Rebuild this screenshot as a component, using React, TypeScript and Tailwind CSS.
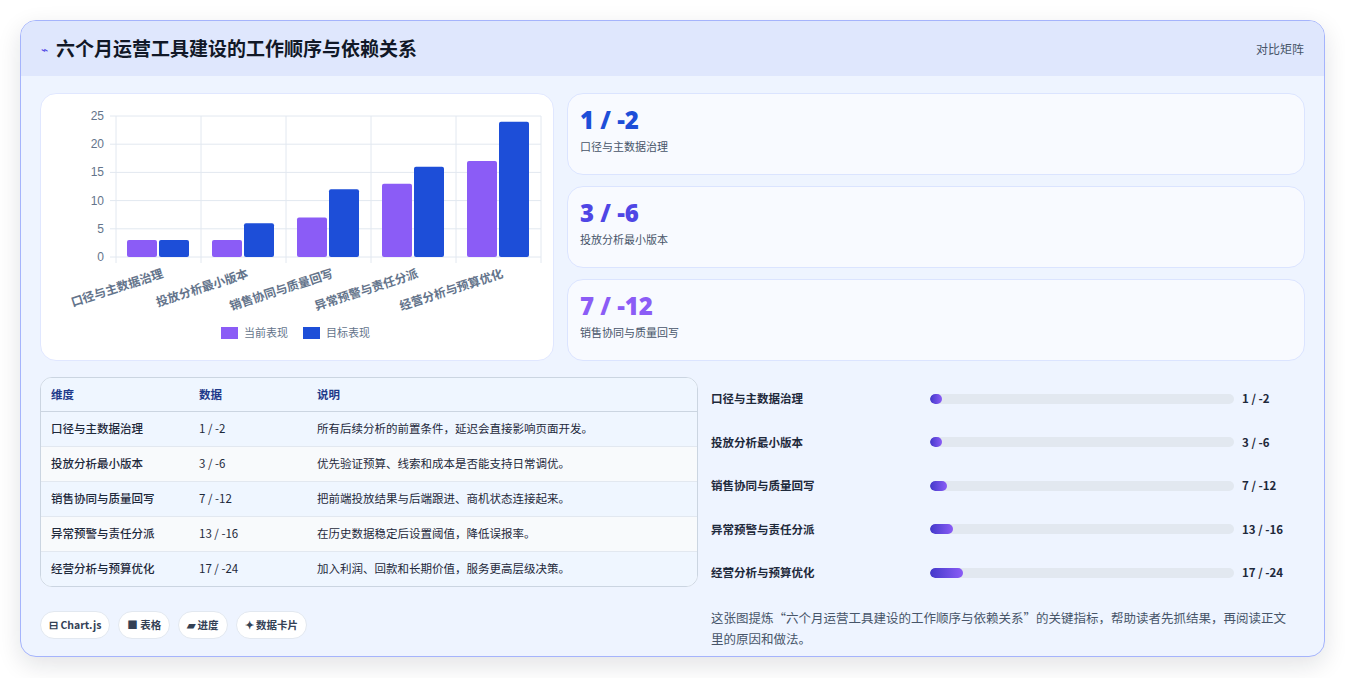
const rows = [
  { name: "口径与主数据治理", cur: 3, tgt: 3, data: "1 / -2", note: "所有后续分析的前置条件，延迟会直接影响页面开发。", pct: 4 },
  { name: "投放分析最小版本", cur: 3, tgt: 6, data: "3 / -6", note: "优先验证预算、线索和成本是否能支持日常调优。", pct: 4 },
  { name: "销售协同与质量回写", cur: 7, tgt: 12, data: "7 / -12", note: "把前端投放结果与后端跟进、商机状态连接起来。", pct: 5.5 },
  { name: "异常预警与责任分派", cur: 13, tgt: 16, data: "13 / -16", note: "在历史数据稳定后设置阈值，降低误报率。", pct: 7.5 },
  { name: "经营分析与预算优化", cur: 17, tgt: 24, data: "17 / -24", note: "加入利润、回款和长期价值，服务更高层级决策。", pct: 11 },
];

const font = { fontFamily: '"Noto Sans CJK SC", "Noto Sans", sans-serif' };

function Chart() {
  const x0 = 75, y0 = 163, top = 22, h = y0 - top, cw = 85;
  const sy = (v: number) => y0 - (v / 25) * h;
  return (
    <svg width="512" height="266" viewBox="0 0 512 266" className="block">
      {[0, 5, 10, 15, 20, 25].map((v) => (
        <g key={v}>
          <line x1={x0 - 6} x2={500} y1={sy(v)} y2={sy(v)} stroke="#e2e8f0" />
          <text x={x0 - 12} y={sy(v) + 4} textAnchor="end" fontSize="12" fill="#64748b" fontFamily="Liberation Sans, sans-serif">{v}</text>
        </g>
      ))}
      {[0, 1, 2, 3, 4, 5].map((i) => (
        <line key={i} x1={x0 + i * cw} x2={x0 + i * cw} y1={top} y2={y0 + 6} stroke="#e2e8f0" />
      ))}
      {rows.map((r, i) => (
        <g key={r.name}>
          <rect x={x0 + i * cw + 11} y={sy(r.cur)} width={30} height={y0 - sy(r.cur)} rx="2" fill="#8b5cf6" />
          <rect x={x0 + i * cw + 43} y={sy(r.tgt)} width={30} height={y0 - sy(r.tgt)} rx="2" fill="#1d4ed8" />
          <text transform={`translate(${x0 + i * cw + 48},${y0 + 20}) rotate(-18)`} textAnchor="end" fontSize="12" fontWeight="700" fill="#64748b" style={font}>{r.name}</text>
        </g>
      ))}
      <rect x="180" y="233" width="17" height="12" fill="#8b5cf6" />
      <text x="203" y="243" fontSize="11" fill="#64748b" style={font}>当前表现</text>
      <rect x="262" y="233" width="17" height="12" fill="#1d4ed8" />
      <text x="285" y="243" fontSize="11" fill="#64748b" style={font}>目标表现</text>
    </svg>
  );
}

const cards = [
  { v: "1 / -2", l: "口径与主数据治理", c: "text-[#1d4ed8]" },
  { v: "3 / -6", l: "投放分析最小版本", c: "text-[#4f46e5]" },
  { v: "7 / -12", l: "销售协同与质量回写", c: "text-[#8b5cf6]" },
];

export default function App() {
  return (
    <div className="min-h-screen bg-white p-5 pb-0" style={font}>
      <div className="rounded-2xl border border-[#a5b4fc] bg-[#eef4ff] shadow-[0_8px_24px_rgba(15,23,42,0.12)] overflow-hidden h-[637px]">
        <div className="flex items-center justify-between h-[55px] bg-[#dfe7fd] px-5">
          <div className="flex items-center gap-2">
            <span className="text-[#4f46e5] text-xs">⌁</span>
            <span className="text-[19px] font-bold text-[#111827]">六个月运营工具建设的工作顺序与依赖关系</span>
          </div>
          <span className="text-xs text-[#475569]">对比矩阵</span>
        </div>
        <div className="px-[19px] pt-[17px]">
          <div className="flex gap-[13px]">
            <div className="w-[514px] h-[268px] rounded-2xl bg-white border border-[#e0e7ff]">
              <Chart />
            </div>
            <div className="flex-1 flex flex-col gap-[11px]">
              {cards.map((c) => (
                <div key={c.v} className="h-[82px] rounded-2xl bg-[#f8faff] border border-[#dbe4ff] px-3 pt-3">
                  <div className={`text-[24px] leading-7 font-extrabold ${c.c}`} style={{ fontFamily: '"Open Sans", sans-serif' }}>{c.v}</div>
                  <div className="text-[11px] text-[#475569] mt-1">{c.l}</div>
                </div>
              ))}
            </div>
          </div>
          <div className="flex gap-[13px] mt-[16px]">
            <div className="w-[658px]">
              <div className="rounded-xl border border-[#cbd5e1] overflow-hidden bg-white">
                <table className="w-full text-[11.5px] text-[#1e293b]">
                  <thead>
                    <tr className="bg-[#eff6ff] h-[33px] text-left text-[#1e3a8a] font-bold border-b border-[#cbd5e1]">
                      <th className="pl-2.5 w-[158px] font-bold">维度</th>
                      <th className="w-[118px] font-bold">数据</th>
                      <th className="font-bold">说明</th>
                    </tr>
                  </thead>
                  <tbody>
                    {rows.map((r, i) => (
                      <tr key={r.name} className={`h-[35px] ${i < 4 ? "border-b border-[#e2e8f0]" : ""} ${i % 2 ? "bg-[#f8fafc]" : "bg-[#eff6ff]"}`}>
                        <td className="pl-2.5 font-medium">{r.name}</td>
                        <td>{r.data}</td>
                        <td>{r.note}</td>
                      </tr>
                    ))}
                  </tbody>
                </table>
              </div>
              <div className="flex gap-2 mt-6">
                {["⊟ Chart.js", "■ 表格", "▰ 进度", "✦ 数据卡片"].map((t) => (
                  <span key={t} className="rounded-full bg-white border border-[#e2e8f0] px-2 h-[28px] flex items-center text-[10.5px] font-bold text-[#334155]">{t}</span>
                ))}
              </div>
            </div>
            <div className="flex-1 pl-0">
              {rows.map((r) => (
                <div key={r.name} className="flex items-center h-[43.5px] text-[11.5px] font-bold text-[#1e293b]">
                  <span className="w-[219px]">{r.name}</span>
                  <div className="w-[304px] h-[10px] rounded-full bg-[#e2e8f0] overflow-hidden">
                    <div className="h-full rounded-full bg-gradient-to-r from-[#4338ca] to-[#8b5cf6]" style={{ width: `${r.pct}%` }} />
                  </div>
                  <span className="ml-2">{r.data}</span>
                </div>
              ))}
              <p className="mt-3 text-[12.5px] leading-[21px] text-[#475569] pr-3">这张图提炼“六个月运营工具建设的工作顺序与依赖关系”的关键指标，帮助读者先抓结果，再阅读正文里的原因和做法。</p>
            </div>
          </div>
        </div>
      </div>
    </div>
  );
}
